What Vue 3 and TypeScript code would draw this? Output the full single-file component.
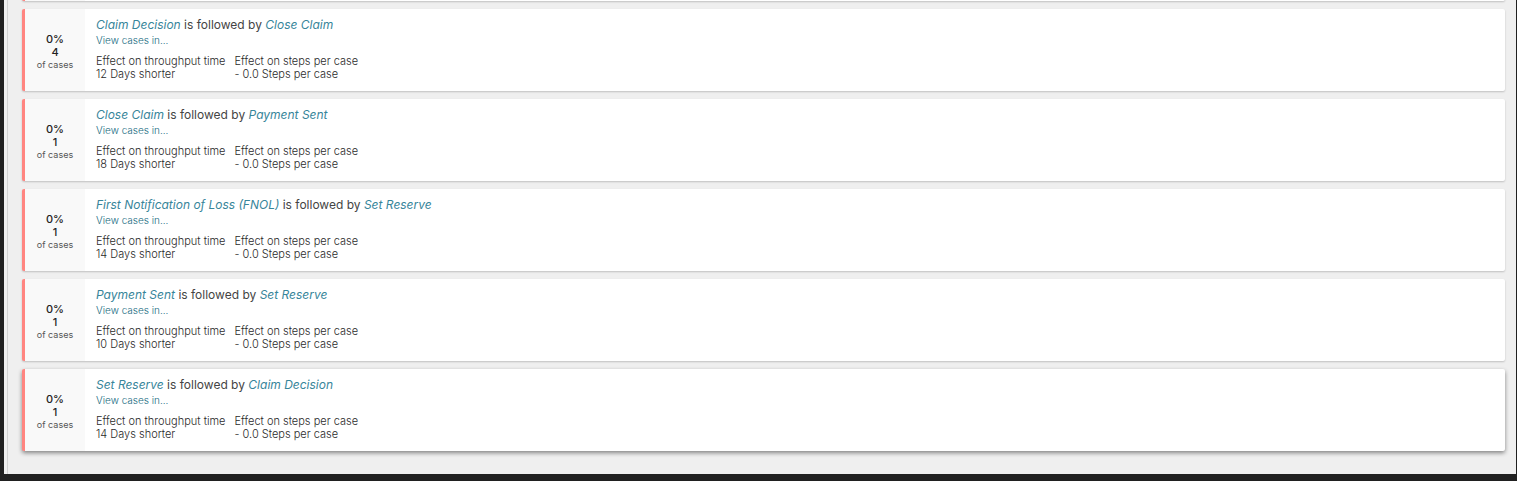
<script setup lang="ts">
interface Violation {
  id: number
  from: string
  to: string
  cases: number
  days: number
  active?: boolean
}

const violations: Violation[] = [
  { id: 1, from: 'Claim Decision', to: 'Close Claim', cases: 4, days: 12 },
  { id: 2, from: 'Close Claim', to: 'Payment Sent', cases: 1, days: 18 },
  { id: 3, from: 'First Notification of Loss (FNOL)', to: 'Set Reserve', cases: 1, days: 14 },
  { id: 4, from: 'Payment Sent', to: 'Set Reserve', cases: 1, days: 10 },
  { id: 5, from: 'Set Reserve', to: 'Claim Decision', cases: 1, days: 14, active: true },
]
</script>

<template>
  <div class="frame">
    <main class="panel">
      <div class="list">
        <div class="card previous"><div class="share"></div></div>
        <article
          v-for="v in violations"
          :key="v.id"
          class="card"
          :class="{ active: v.active }"
        >
          <div class="share">
            <span class="percent">0%</span>
            <span class="count">{{ v.cases }}</span>
            <span class="caption">of cases</span>
          </div>
          <div class="body">
            <h2 class="title"><em>{{ v.from }}</em> is followed by <em>{{ v.to }}</em></h2>
            <a class="view" href="#">View cases in...</a>
            <dl class="effects">
              <div>
                <dt>Effect on throughput time</dt>
                <dd>{{ v.days }} Days shorter</dd>
              </div>
              <div>
                <dt>Effect on steps per case</dt>
                <dd>- 0.0 Steps per case</dd>
              </div>
            </dl>
          </div>
        </article>
      </div>
    </main>
  </div>
</template>

<style>
body {
  background: #202020;
}
</style>

<style scoped>
.frame {
  box-sizing: border-box;
  height: 100vh;
  padding: 0 1px 7px 4px;
  background: #202020;
  overflow: hidden;
  font-family: Inter, "Liberation Sans", sans-serif;
  color: #2a2a2a;
}
.panel {
  box-sizing: border-box;
  height: 100%;
  padding-left: 3px;
  background: #efefef;
  overflow: hidden;
}
.list {
  box-sizing: border-box;
  height: 100%;
  display: flex;
  flex-direction: column;
  justify-content: flex-end;
  gap: 8px;
  padding: 0 11px 23px 14px;
  border-left: 1px solid #d2d2d2;
}
.card {
  box-sizing: border-box;
  flex: none;
  min-height: 82px;
  display: flex;
  background: #fff;
  border-left: 3px solid #ff8580;
  border-radius: 2px;
  box-shadow: 0 1px 2px rgba(0, 0, 0, 0.2);
}
.card.active {
  box-shadow: 0 2px 4px rgba(0, 0, 0, 0.45);
}
.share {
  box-sizing: border-box;
  width: 60px;
  padding-top: 4px;
  display: flex;
  flex-direction: column;
  align-items: center;
  justify-content: center;
  background: #f9f9f9;
  color: #222;
}
.percent,
.count {
  font-size: 11px;
  line-height: 13px;
  font-weight: 500;
}
.caption {
  font-size: 9px;
  line-height: 12px;
  color: #555;
}
.body {
  display: flex;
  flex-direction: column;
  align-items: flex-start;
  padding: 8px 11px;
}
.title {
  margin: 0;
  font-size: 12px;
  line-height: 16px;
  font-weight: 400;
  color: #444;
}
.title em {
  color: #37859a;
}
.view {
  font-size: 10px;
  line-height: 14px;
  font-weight: 300;
  color: #14687e;
  text-decoration: none;
}
.effects {
  display: flex;
  gap: 9px;
  margin: 8px 0 0;
  font-size: 11px;
  line-height: 13px;
  font-weight: 300;
}
.effects dd {
  margin: 0;
}
</style>
